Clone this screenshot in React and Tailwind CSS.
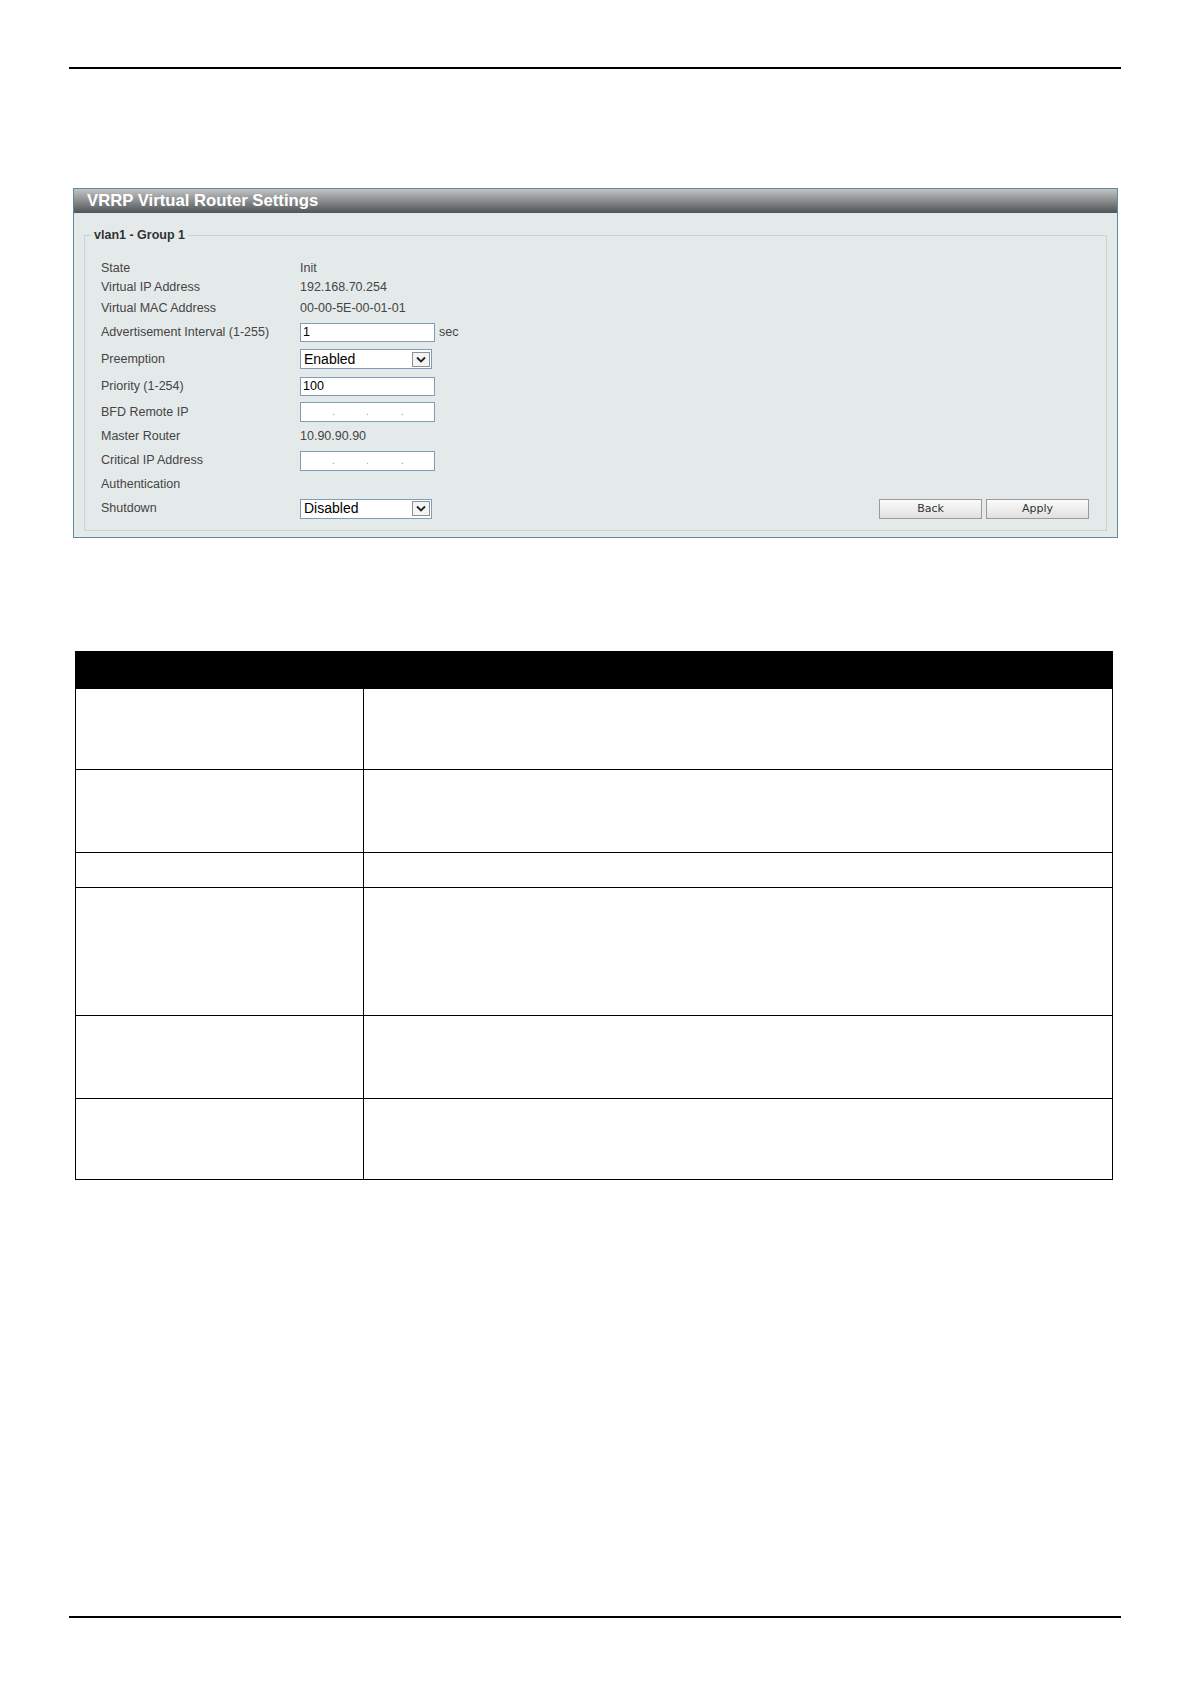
import React from "react";

const FONT = { fontFamily: '"Liberation Sans", Arial, sans-serif' };

function TextInput({ value }) {
  return (
    <div className="w-[135px] h-[19px] bg-white border border-[#7f9db9] flex items-center pl-[2px] text-[12.5px] text-black">
      {value}
    </div>
  );
}

function IpInput() {
  return (
    <div className="w-[135px] h-[20px] bg-white border border-[#7f9db9] flex items-center text-[10px] text-[#9a9a9a] leading-none">
      <span className="w-[31px]" />
      <span className="w-[2px]">.</span>
      <span className="w-[32px]" />
      <span className="w-[2px]">.</span>
      <span className="w-[33px]" />
      <span className="w-[2px]">.</span>
    </div>
  );
}

function Select({ value }) {
  return (
    <div className="w-[132px] h-[20px] bg-white border border-[#7f9db9] flex items-center justify-between pl-[3px] pr-[1px] text-[14px] text-black">
      <span>{value}</span>
      <span className="w-[18px] h-[15px] border border-[#8e8f8f] bg-[#f4f4f4] flex items-center justify-center">
        <svg width="10" height="7" viewBox="0 0 10 7">
          <path d="M1 1.5 L5 5.5 L9 1.5" fill="none" stroke="#222" strokeWidth="1.8" />
        </svg>
      </span>
    </div>
  );
}

function Row({ label, h, children }) {
  return (
    <div className={`flex items-center ${h}`}>
      <div className="w-[199px] text-[12.5px] text-[#444]">{label}</div>
      <div className="flex items-center text-[12.5px] text-[#444]">{children}</div>
    </div>
  );
}

function Button({ children }) {
  return (
    <div
      className="w-[103px] h-[20px] border border-[#9a9a9a] bg-gradient-to-b from-[#fbfbfb] to-[#e0e0e0] flex items-center justify-center text-[11px] text-[#333]"
      style={{ fontFamily: '"DejaVu Sans", Verdana, sans-serif' }}
    >
      {children}
    </div>
  );
}

function SettingsPanel() {
  return (
    <div className="ml-[73px] w-[1045px] border border-[#5d8aa3] bg-[#e4eaea]">
      <div className="h-[24px] bg-gradient-to-b from-[#c4c4c4] via-[#8a8c8d] to-[#4e5558] flex items-center pl-[13px] pb-[1px] text-[16.7px] font-bold text-white">
        VRRP Virtual Router Settings
      </div>
      <div className="px-[10px] pt-[13px] pb-[6px]">
        <fieldset className="border border-[#cbd4d4] pl-[16px] pr-[16px] pb-[9px]">
          <legend className="ml-[-10px] px-[3px] text-[12.5px] font-bold text-[#333]">vlan1 - Group 1</legend>
          <div className="pt-[14px]">
            <Row label="State" h="h-[19px]">Init</Row>
            <Row label="Virtual IP Address" h="h-[20px]">192.168.70.254</Row>
            <Row label="Virtual MAC Address" h="h-[22px]">00-00-5E-00-01-01</Row>
            <Row label="Advertisement Interval (1-255)" h="h-[26px]">
              <TextInput value="1" />
              <span className="ml-[4px]">sec</span>
            </Row>
            <Row label="Preemption" h="h-[27px]">
              <Select value="Enabled" />
            </Row>
            <Row label="Priority (1-254)" h="h-[27px]">
              <TextInput value="100" />
            </Row>
            <Row label="BFD Remote IP" h="h-[25px]">
              <IpInput />
            </Row>
            <Row label="Master Router" h="h-[24px]">10.90.90.90</Row>
            <Row label="Critical IP Address" h="h-[24px]">
              <IpInput />
            </Row>
            <Row label="Authentication" h="h-[24px]" />
            <div className="flex items-center h-[24px]">
              <div className="w-[199px] text-[12.5px] text-[#444]">Shutdown</div>
              <Select value="Disabled" />
              <div className="flex-1" />
              <div className="flex gap-[4px] pr-[1px]">
                <Button>Back</Button>
                <Button>Apply</Button>
              </div>
            </div>
          </div>
        </fieldset>
      </div>
    </div>
  );
}

const rows = [81, 83, 35, 128, 83, 81];

function EmptyTable() {
  return (
    <table className="ml-[75px] w-[1038px] border-collapse table-fixed">
      <thead>
        <tr className="h-[37px] bg-black">
          <th className="w-[288px] border border-black" />
          <th className="border border-black" />
        </tr>
      </thead>
      <tbody>
        {rows.map((h, i) => (
          <tr key={i} style={{ height: h }}>
            <td className="border-[1.5px] border-black" />
            <td className="border-[1.5px] border-black" />
          </tr>
        ))}
      </tbody>
    </table>
  );
}

export default function App() {
  return (
    <div className="w-[1191px] h-[1683px] bg-white flex flex-col" style={FONT}>
      <div className="mt-[67px] ml-[69px] w-[1052px] h-[2px] bg-black" />
      <div className="mt-[119px]">
        <SettingsPanel />
      </div>
      <div className="mt-[113px]">
        <EmptyTable />
      </div>
      <div className="mt-[436px] ml-[69px] w-[1052px] h-[2px] bg-black" />
    </div>
  );
}
